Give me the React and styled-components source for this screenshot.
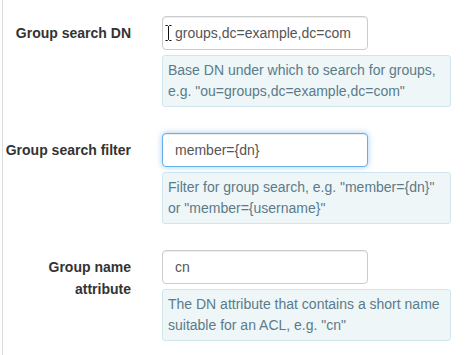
import React from 'react';
import styled, { createGlobalStyle } from 'styled-components';

const GlobalStyle = createGlobalStyle`
  html, body {
    margin: 0;
    padding: 0;
    background: #fff;
  }
  body {
    font-family: "Liberation Sans", Arial, sans-serif;
    font-size: 14px;
    color: #333;
  }
`;

const fields = [
  {
    label: 'Group search DN',
    value: 'groups,dc=example,dc=com',
    help: 'Base DN under which to search for groups, e.g. "ou=groups,dc=example,dc=com"',
    cursor: true,
  },
  {
    label: 'Group search filter',
    value: 'member={dn}',
    help: 'Filter for group search, e.g. "member={dn}" or "member={username}"',
    focused: true,
  },
  {
    label: 'Group name attribute',
    value: 'cn',
    help: 'The DN attribute that contains a short name suitable for an ACL, e.g. "cn"',
  },
];

export default function App() {
  return (
    <>
      <GlobalStyle />
      <Panel>
        {fields.map((f) => (
          <Row key={f.label}>
            <Label>{f.label}</Label>
            <Field>
              <InputWrap>
                <Input defaultValue={f.value} $focused={f.focused} readOnly />
                {f.cursor && (
                  <Cursor width="7" height="16" viewBox="0 0 7 16">
                    <path d="M0.5 0.5 H2.5 L3.5 1.5 L4.5 0.5 H6.5 M3.5 1.5 V14.5 M0.5 15.5 H2.5 L3.5 14.5 L4.5 15.5 H6.5" fill="none" stroke="#111" strokeWidth="1" />
                  </Cursor>
                )}
              </InputWrap>
              <Help>{f.help}</Help>
            </Field>
          </Row>
        ))}
      </Panel>
    </>
  );
}

const Panel = styled.div`
  margin-left: 2px;
  border-left: 1px solid #dcdcdc;
  height: 355px;
  box-sizing: border-box;
  padding-top: 16px;
  display: flex;
  flex-direction: column;
  gap: 26px;
`;

const Row = styled.div`
  display: grid;
  grid-template-columns: 128px 289px;
  column-gap: 31px;
`;

const Label = styled.label`
  text-align: right;
  font-weight: bold;
  line-height: 22px;
  padding-top: 6px;
  padding-left: 2px;
  color: #333;
`;

const Field = styled.div`
  display: flex;
  flex-direction: column;
  gap: 5px;
`;

const InputWrap = styled.div`
  position: relative;
  width: 206px;
`;

const Input = styled.input`
  box-sizing: border-box;
  width: 206px;
  height: 34px;
  padding: 0 12px;
  font-family: "Liberation Sans", Arial, sans-serif;
  font-size: 14px;
  color: #555;
  background: #fff;
  border: 1px solid ${(p) => (p.$focused ? '#66afe9' : '#ccc')};
  border-radius: 4px;
  outline: none;
  box-shadow: ${(p) =>
    p.$focused
      ? 'inset 0 1px 1px rgba(0,0,0,.075), 0 0 6px rgba(102,175,233,.6)'
      : 'inset 0 1px 1px rgba(0,0,0,.075)'};
`;

const Cursor = styled.svg`
  position: absolute;
  left: 3px;
  top: 9px;
`;

const Help = styled.div`
  box-sizing: border-box;
  width: 289px;
  padding: 4px 5px;
  line-height: 21px;
  font-size: 14px;
  color: #5b7b8a;
  background: #eef6f8;
  border: 1px solid #cfe6ee;
  border-radius: 3px;
`;
